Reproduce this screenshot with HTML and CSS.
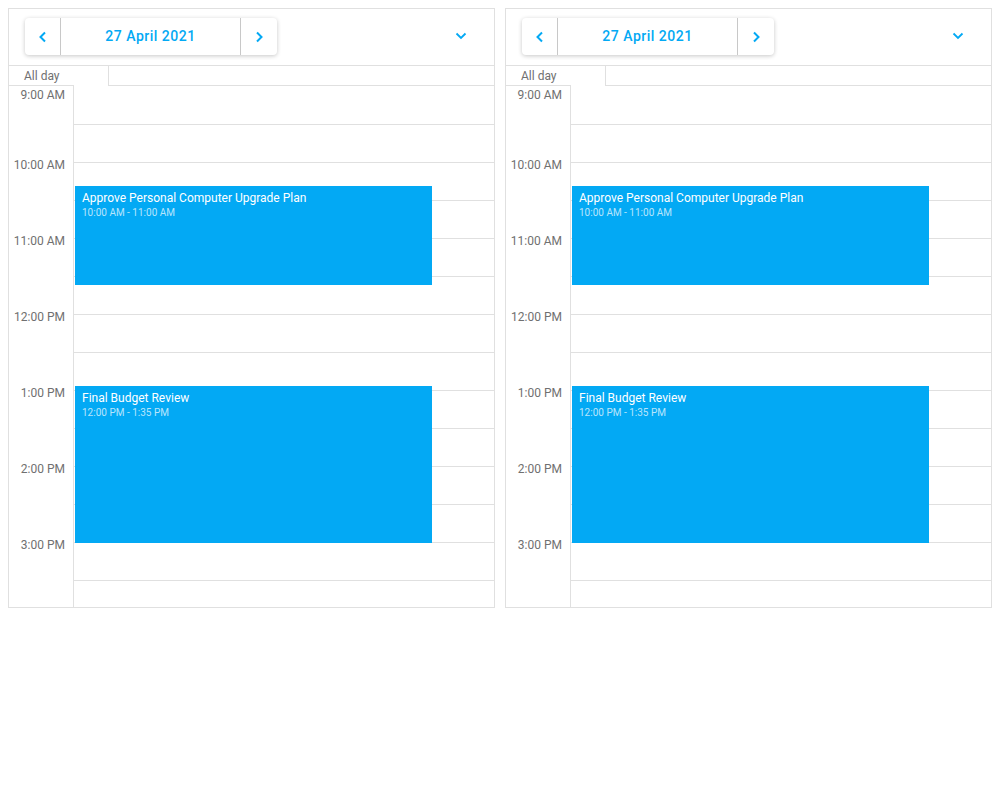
FILE: index.html
```html
<!DOCTYPE html>
<html>
<head>
<meta charset="utf-8">
<link rel="stylesheet" href="styles.css">
</head>
<body>
<div class="panel">
  <div class="header">
    <div class="nav">
      <button class="nav-btn prev"><svg width="10" height="12" viewBox="0 0 10 12"><polyline points="7,1.5 2.5,6 7,10.5" fill="none" stroke="#03a9f4" stroke-width="2"/></svg></button>
      <div class="nav-date">27 April 2021</div>
      <button class="nav-btn next"><svg width="10" height="12" viewBox="0 0 10 12"><polyline points="3,1.5 7.5,6 3,10.5" fill="none" stroke="#03a9f4" stroke-width="2"/></svg></button>
    </div>
    <div class="dropdown"><svg width="12" height="8" viewBox="0 0 12 8"><polyline points="1.5,1.5 6,6 10.5,1.5" fill="none" stroke="#03a9f4" stroke-width="1.8"/></svg></div>
  </div>
  <div class="allday-row">
    <div class="allday-label">All day</div>
    <div class="allday-cell"></div>
  </div>
  <div class="body">
    <div class="times">
      <div class="time first">9:00 AM</div>
      <div class="time">10:00 AM</div>
      <div class="time">11:00 AM</div>
      <div class="time">12:00 PM</div>
      <div class="time">1:00 PM</div>
      <div class="time">2:00 PM</div>
      <div class="time">3:00 PM</div>
    </div>
    <div class="day">
      <div class="slot"></div><div class="slot"></div><div class="slot"></div><div class="slot"></div>
      <div class="slot"></div><div class="slot"></div><div class="slot"></div><div class="slot"></div>
      <div class="slot"></div><div class="slot"></div><div class="slot"></div><div class="slot"></div>
      <div class="slot"></div><div class="slot"></div>
      <div class="event ev1">
        <div class="ev-title">Approve Personal Computer Upgrade Plan</div>
        <div class="ev-time">10:00 AM - 11:00 AM</div>
      </div>
      <div class="event ev2">
        <div class="ev-title">Final Budget Review</div>
        <div class="ev-time">12:00 PM - 1:35 PM</div>
      </div>
    </div>
  </div>
</div>
<div class="panel">
  <div class="header">
    <div class="nav">
      <button class="nav-btn prev"><svg width="10" height="12" viewBox="0 0 10 12"><polyline points="7,1.5 2.5,6 7,10.5" fill="none" stroke="#03a9f4" stroke-width="2"/></svg></button>
      <div class="nav-date">27 April 2021</div>
      <button class="nav-btn next"><svg width="10" height="12" viewBox="0 0 10 12"><polyline points="3,1.5 7.5,6 3,10.5" fill="none" stroke="#03a9f4" stroke-width="2"/></svg></button>
    </div>
    <div class="dropdown"><svg width="12" height="8" viewBox="0 0 12 8"><polyline points="1.5,1.5 6,6 10.5,1.5" fill="none" stroke="#03a9f4" stroke-width="1.8"/></svg></div>
  </div>
  <div class="allday-row">
    <div class="allday-label">All day</div>
    <div class="allday-cell"></div>
  </div>
  <div class="body">
    <div class="times">
      <div class="time first">9:00 AM</div>
      <div class="time">10:00 AM</div>
      <div class="time">11:00 AM</div>
      <div class="time">12:00 PM</div>
      <div class="time">1:00 PM</div>
      <div class="time">2:00 PM</div>
      <div class="time">3:00 PM</div>
    </div>
    <div class="day">
      <div class="slot"></div><div class="slot"></div><div class="slot"></div><div class="slot"></div>
      <div class="slot"></div><div class="slot"></div><div class="slot"></div><div class="slot"></div>
      <div class="slot"></div><div class="slot"></div><div class="slot"></div><div class="slot"></div>
      <div class="slot"></div><div class="slot"></div>
      <div class="event ev1">
        <div class="ev-title">Approve Personal Computer Upgrade Plan</div>
        <div class="ev-time">10:00 AM - 11:00 AM</div>
      </div>
      <div class="event ev2">
        <div class="ev-title">Final Budget Review</div>
        <div class="ev-time">12:00 PM - 1:35 PM</div>
      </div>
    </div>
  </div>
</div>
</body>
</html>
```
FILE: styles.css
```css
* { box-sizing: border-box; }
html, body { background: #fff; }
body {
  margin: 8px;
  display: flex;
  gap: 10px;
  font-family: Roboto, "Liberation Sans", sans-serif;
  color: #707070;
}
.panel {
  width: 487px;
  height: 600px;
  border: 1px solid #e0e0e0;
  background: #fff;
  overflow: hidden;
  display: flex;
  flex-direction: column;
}
.header {
  height: 57px;
  flex: none;
  border-bottom: 1px solid #e0e0e0;
  display: flex;
  align-items: center;
  padding-left: 16px;
  padding-bottom: 1px;
}
.nav {
  display: flex;
  height: 37px;
  width: 252px;
  border-radius: 4px;
  background: #fff;
  box-shadow: 0 1px 4px rgba(0,0,0,0.22);
}
.nav-btn {
  border: none;
  background: transparent;
  padding: 0;
  margin: 0;
  height: 37px;
  display: flex;
  align-items: center;
  justify-content: center;
  cursor: pointer;
}
.nav-btn.prev { border-right: 1px solid #c8c8c8; width: 36px; }
.nav-btn.next { border-left: 1px solid #c8c8c8; width: 37px; }
.nav-date {
  flex: 1;
  display: flex;
  align-items: center;
  justify-content: center;
  color: #03a9f4;
  font-size: 14px;
  font-weight: 500;
  letter-spacing: 0.5px;
  padding-bottom: 2px;
}
.dropdown {
  margin-left: auto;
  margin-right: 27px;
  display: flex;
  align-items: center;
  margin-top: -2px;
}
.allday-row {
  display: flex;
  height: 20px;
  flex: none;
}
.allday-label {
  width: 100px;
  border-right: 1px solid #e0e0e0;
  font-size: 12px;
  line-height: 19px;
  padding-top: 1px;
  padding-left: 15px;
}
.allday-cell {
  flex: 1;
  border-bottom: 1px solid #e0e0e0;
}
.body {
  margin-top: -1px;
  flex: 1;
  display: flex;
  overflow: hidden;
}
.times {
  width: 65px;
  flex: none;
  border-top: 1px solid #e0e0e0;
  border-right: 1px solid #e0e0e0;
  display: flex;
  flex-direction: column;
  padding-top: 1px;
}
.time {
  height: 76px;
  flex: none;
  font-size: 12px;
  line-height: 16px;
  text-align: right;
  padding-right: 8px;
  white-space: nowrap;
}
.time.first { height: 70px; }
.day {
  flex: 1;
  position: relative;
  padding-top: 2px;
}
.slot {
  height: 38px;
  border-bottom: 1px solid #e0e0e0;
}
.event {
  position: absolute;
  left: 1px;
  width: 357px;
  background: #03a9f4;
  padding: 5px 7px;
  color: #fff;
}
.ev1 { top: 101px; height: 99px; }
.ev2 { top: 301px; height: 157px; }
.ev-title {
  font-size: 12px;
  line-height: 15px;
}
.ev-time {
  font-size: 10px;
  line-height: 13px;
  color: rgba(255,255,255,0.72);
}
```
